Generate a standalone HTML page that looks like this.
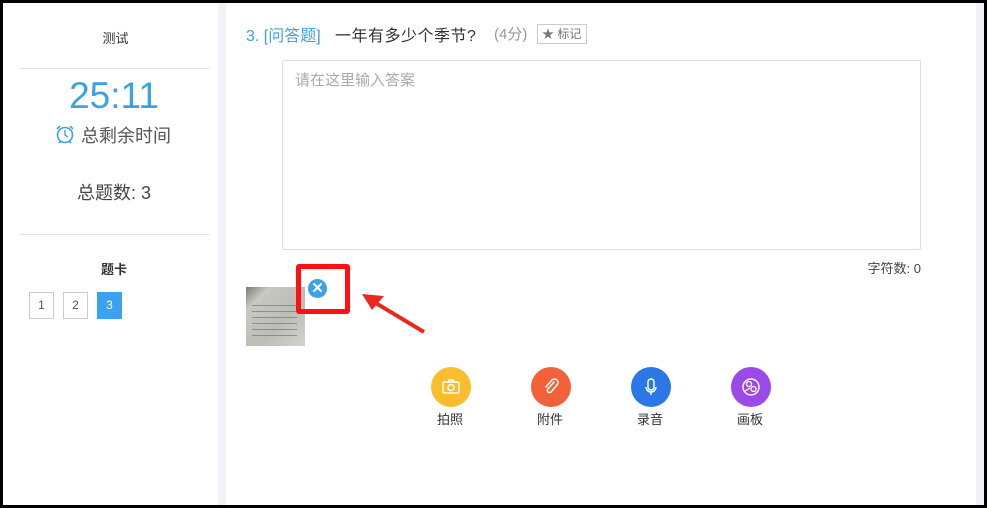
<!DOCTYPE html>
<html><head><meta charset="utf-8"><style>
*{margin:0;padding:0;box-sizing:border-box}
body{width:987px;height:508px;background:#000;position:relative;overflow:hidden;font-family:"Liberation Sans","Noto Sans CJK SC",sans-serif;color:#333}
.a{position:absolute}
</style></head><body>
<div class="a" style="left:3px;top:3px;width:981px;height:502px;background:#f1f1f7"></div>
<div class="a" style="left:3px;top:3px;width:215px;height:502px;background:#fff"></div>
<div class="a" style="left:226px;top:3px;width:750px;height:502px;background:#fff"></div>
<div class="a" style="left:3px;width:225px;top:28px;text-align:center;font-size:13px;color:#333">测试</div>
<div class="a" style="left:19px;top:68px;width:191px;height:1px;background:#e4e4e4"></div>
<div class="a" style="left:3px;width:222px;top:73px;text-align:center;font-size:37px;color:#3aa2e6;line-height:46px">25:11</div>
<div class="a" style="left:55px;top:124px;width:20px;height:20px">
<svg width="20" height="20" viewBox="0 0 20 20"><circle cx="10" cy="11" r="7.5" fill="none" stroke="#3aa2e6" stroke-width="1.6"/><path d="M10 6v5l3 2" fill="none" stroke="#3aa2e6" stroke-width="1.4"/><path d="M2 5l3-3M18 5l-3-3M4 19l2-2M16 19l-2-2" stroke="#3aa2e6" stroke-width="1.6"/></svg></div>
<div class="a" style="left:81px;top:122px;font-size:18px;color:#555">总剩余时间</div>
<div class="a" style="left:3px;width:222px;top:179px;text-align:center;font-size:18px;color:#444">总题数: 3</div>
<div class="a" style="left:19px;top:234px;width:191px;height:1px;background:#e4e4e4"></div>
<div class="a" style="left:3px;width:222px;top:259px;text-align:center;font-size:13px;font-weight:bold;color:#333">题卡</div>
<div class="a" style="left:29px;top:292px;width:25px;height:27px;border:1px solid #ccc;font-size:12px;text-align:center;line-height:25px;color:#555">1</div>
<div class="a" style="left:63px;top:292px;width:25px;height:27px;border:1px solid #ccc;font-size:12px;text-align:center;line-height:25px;color:#555">2</div>
<div class="a" style="left:97px;top:292px;width:25px;height:27px;background:#3aa2f0;font-size:12px;text-align:center;line-height:27px;color:#fff">3</div>
<div class="a" style="left:246px;top:22px;font-size:16px;color:#3aa2e6">3. [问答题]</div>
<div class="a" style="left:335px;top:22px;font-size:16px;color:#333;letter-spacing:0.5px">一年有多少个季节?</div>
<div class="a" style="left:494px;top:23px;font-size:15px;color:#999">(4分)</div>
<div class="a" style="left:537px;top:24px;width:50px;height:20px;border:1px solid #ccc;font-size:12px;color:#777;line-height:18px;padding-left:4px">★ 标记</div>
<div class="a" style="left:282px;top:60px;width:639px;height:190px;border:1px solid #ddd;border-radius:2px"></div>
<div class="a" style="left:295px;top:69px;font-size:15px;color:#aaa">请在这里输入答案</div>
<div class="a" style="left:780px;width:141px;text-align:right;top:258px;font-size:13px;color:#444">字符数: 0</div>
<div class="a" style="left:246px;top:287px;width:59px;height:59px;background:linear-gradient(135deg,#7a7a70 0%,#c8c8c2 20%,#bdbdb7 60%,#d2d2cd 100%)"></div>
<div class="a" style="left:252px;top:300px;width:45px;height:40px;background:repeating-linear-gradient(180deg,transparent 0 5px,#6a6a70 5px 6px);opacity:.6"></div>
<div class="a" style="left:296px;top:264px;width:54px;height:50px;border:5px solid #f11;border-radius:3px"></div>
<div class="a" style="left:308px;top:279px;width:19px;height:19px;border-radius:50%;background:#3aa2e6;color:#fff;font-size:15px;font-weight:bold;text-align:center;line-height:19px">✕</div>
<svg class="a" style="left:360px;top:290px" width="66" height="45" viewBox="0 0 66 45"><path d="M64 42L14 12" stroke="#e8291c" stroke-width="4"/><path d="M2 4L24 6L12 20Z" fill="#e8291c"/></svg>
<div class="a" style="left:431px;top:367px;width:40px;height:40px;border-radius:50%;background:#fbbd2e"></div>
<svg class="a" style="left:441px;top:377px" width="20" height="20" viewBox="0 0 20 20"><rect x="2" y="5" width="16" height="11" rx="1.5" fill="none" stroke="#fff" stroke-width="1.5"/><circle cx="10" cy="10.5" r="3" fill="none" stroke="#fff" stroke-width="1.5"/><path d="M7 5l1-2h4l1 2" fill="none" stroke="#fff" stroke-width="1.5"/></svg>
<div class="a" style="left:437px;top:409px;font-size:13px">拍照</div>
<div class="a" style="left:531px;top:367px;width:40px;height:40px;border-radius:50%;background:#f36138"></div>
<svg class="a" style="left:541px;top:377px" width="20" height="20" viewBox="0 0 20 20"><path d="M13 5l-6 7a2 2 0 0 0 3 3l6-7a3.5 3.5 0 0 0-5-5l-6 7" fill="none" stroke="#fff" stroke-width="1.5" stroke-linecap="round"/></svg>
<div class="a" style="left:537px;top:409px;font-size:13px">附件</div>
<div class="a" style="left:631px;top:367px;width:40px;height:40px;border-radius:50%;background:#2b77e5"></div>
<svg class="a" style="left:641px;top:377px" width="20" height="20" viewBox="0 0 20 20"><rect x="7" y="2" width="6" height="11" rx="3" fill="none" stroke="#fff" stroke-width="1.5"/><path d="M5 10a5 5 0 0 0 10 0M10 15v3" fill="none" stroke="#fff" stroke-width="1.5"/></svg>
<div class="a" style="left:637px;top:409px;font-size:13px">录音</div>
<div class="a" style="left:731px;top:367px;width:40px;height:40px;border-radius:50%;background:#9b4ae8"></div>
<svg class="a" style="left:741px;top:377px" width="20" height="20" viewBox="0 0 20 20"><circle cx="10" cy="10" r="8" fill="none" stroke="#fff" stroke-width="1.4"/><circle cx="8" cy="7" r="2.5" fill="none" stroke="#fff" stroke-width="1.3"/><circle cx="12.5" cy="12" r="2.5" fill="none" stroke="#fff" stroke-width="1.3"/><path d="M4 14l5-3" stroke="#fff" stroke-width="1.3"/></svg>
<div class="a" style="left:737px;top:409px;font-size:13px">画板</div>
</body></html>
